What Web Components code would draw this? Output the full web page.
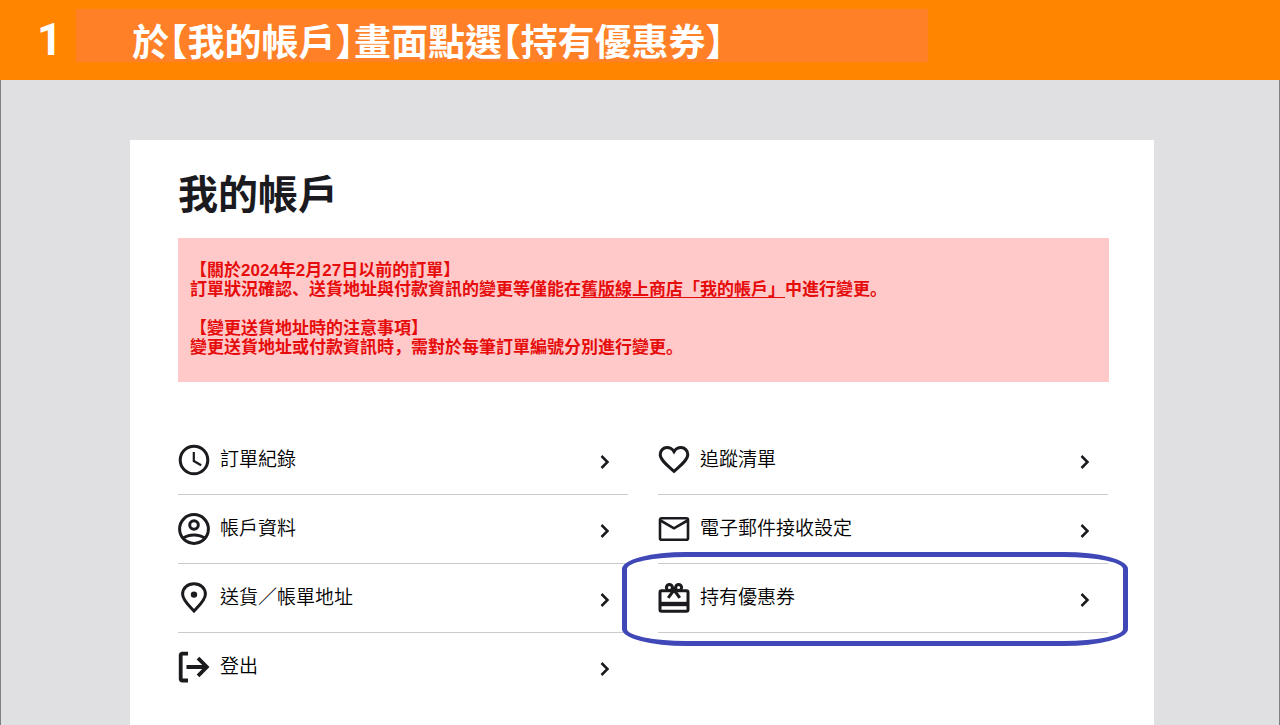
<!DOCTYPE html>
<html lang="zh-Hant">
<head>
<meta charset="utf-8">
<meta name="viewport" content="width=device-width, initial-scale=1">
<title>我的帳戶</title>
<style>
  html, body { margin: 0; min-height: 100%; }
  body {
    min-height: 100vh;
    display: flex;
    flex-direction: column;
    font-family: "Liberation Sans", "Noto Sans CJK JP", sans-serif;
    color: #1b1b1f;
    overflow-x: hidden;
  }
</style>
</head>
<body>
<step-banner step="1">於【我的帳戶】畫面點選【持有優惠券】</step-banner>
<account-page>
  <span slot="title">我的帳戶</span>
  <notice-box slot="notice" lang="zh"></notice-box>
  <menu-item icon="clock">訂單紀錄</menu-item>
  <menu-item icon="heart">追蹤清單</menu-item>
  <menu-item icon="user">帳戶資料</menu-item>
  <menu-item icon="mail">電子郵件接收設定</menu-item>
  <menu-item icon="pin">送貨／帳單地址</menu-item>
  <menu-item icon="gift" highlighted>持有優惠券</menu-item>
  <menu-item icon="logout" last>登出</menu-item>
</account-page>

<template id="step-banner">
  <style>
    :host { display: block; background: #ff8500; color: #fff; }
    header { display: flex; align-items: flex-start; height: 80px; }
    .step {
      flex: 0 0 76px; box-sizing: border-box; padding-left: 37px;
      font: 700 44px/80px Roboto, sans-serif;
    }
    h2 {
      flex: 0 1 852px; box-sizing: border-box; margin: 9px 0 0; padding-left: 56px;
      height: 53px; background: #ff8026; white-space: nowrap;
      font: 700 37px/62px "Noto Sans CJK JP", sans-serif;
      font-feature-settings: "halt";
    }
  </style>
  <header><span class="step"></span><h2><slot></slot></h2></header>
</template>

<template id="account-page">
  <style>
    :host {
      display: flex; flex: 1; box-sizing: border-box;
      padding: 60px 125px 0 129px;
      background: #e0e0e2;
      border: solid #808082; border-width: 0 1px;
    }
    main { flex: 1; min-width: 0; background: #fff; padding: 22px 45px 28px 48px; }
    h1 { margin: 0; font: 700 40px/60px "Noto Sans CJK JP", sans-serif; }
    .notice { margin-top: 16px; }
    nav {
      display: grid; grid-template-columns: 1fr 1fr; column-gap: 30px;
      margin-top: 44px; padding-right: 1px;
    }
  </style>
  <main>
    <h1><slot name="title"></slot></h1>
    <div class="notice"><slot name="notice"></slot></div>
    <nav><slot></slot></nav>
  </main>
</template>

<template id="notice-box">
  <style>
    :host {
      display: block; box-sizing: border-box; padding: 23px 12px 25px;
      background: #ffc9c9; color: #e60c0c;
      font-weight: 700; font-size: 17px; line-height: 19px;
    }
    p { margin: 0; }
    p + p { margin-top: 20px; }
    a { color: inherit; text-underline-offset: 2px; text-decoration-thickness: 1px; }
  </style>
  <p>【關於2024年2月27日以前的訂單】<br>訂單狀況確認、送貨地址與付款資訊的變更等僅能在<a href="#old-store">舊版線上商店「我的帳戶」</a>中進行變更。</p>
  <p>【變更送貨地址時的注意事項】<br>變更送貨地址或付款資訊時，需對於每筆訂單編號分別進行變更。</p>
</template>

<template id="menu-item">
  <style>
    :host { display: block; position: relative; }
    a {
      display: flex; align-items: center; gap: 10px;
      height: 68px; padding-right: 18px;
      border-bottom: 1px solid #cacacd;
      color: #000; text-decoration: none;
      font: 350 19px/28px "Noto Sans CJK JP", sans-serif;
    }
    :host([last]) a { border-bottom-color: transparent; }
    .label { flex: 1; padding-bottom: 4px; }
    .icon { flex: none; color: #1b1b1f; }
    .chevron { flex: none; margin-top: 4px; color: #1b1b1f; }
    svg { display: block; fill: none; stroke: currentColor; stroke-width: 3; }
    .ring { display: none; }
    :host([highlighted]) .ring {
      display: block; position: absolute; inset: -12px -20px -13px -36px;
      border: 5px solid #4048b8; border-radius: 64px / 17px;
      pointer-events: none;
    }
  </style>
  <a href="#">
    <span class="icon"></span>
    <span class="label"><slot></slot></span>
    <svg class="chevron" width="10" height="14" viewBox="0 0 10 14" style="stroke-width:2.5"><path d="M1.5 1l6 6-6 6"/></svg>
  </a>
  <span class="ring"></span>
</template>

<script>
  const ICONS = {
    clock: '<circle cx="16" cy="16" r="13.8"/><path stroke-width="2.2" d="M15.8 8v9l7.4 4.2"/>',
    user: '<circle cx="16" cy="16" r="14.4"/><circle cx="16" cy="12" r="4.3"/><path d="M4.5 25.5C11 20.8 21 20.8 27.5 25.5"/>',
    pin: '<path d="M16 29C11 23.6 4.6 18 4.6 12.2C4.6 6 9.7 1.7 16 1.7S27.4 6 27.4 12.2C27.4 18 21 23.6 16 29Z"/><circle cx="16" cy="12.6" r="3.2" fill="currentColor" stroke="none"/>',
    logout: '<path stroke-width="3.8" d="M10 2.6H4.2a1.5 1.5 0 0 0-1.5 1.5V28a1.5 1.5 0 0 0 1.5 1.500H10M8.500 16H28.500M20 7.200l8.800 8.800-8.800 8.800"/>',
    heart: '<path d="M16 27.3C10 21.8 2.2 16.3 2.2 10.6C2.2 6.6 5.2 3.6 9 3.6C12 3.6 14.5 5.2 16 7.6C17.5 5.2 20 3.6 23 3.6C26.8 3.6 29.8 6.6 29.8 10.6C29.8 16.3 22 21.8 16 27.3Z"/>',
    mail: '<rect x="2" y="5.3" width="28" height="21.5" rx="1.5" stroke-width="2.6"/><path stroke-width="2.6" d="M2.5 7.5L16 15.3L29.5 7.5"/>',
    gift: '<rect x="2" y="8.7" width="28" height="20.5" rx="1.5" stroke-width="3"/><path stroke-width="4.4" d="M2 22H30"/><circle cx="11.4" cy="5.4" r="3" stroke-width="3"/><circle cx="20.6" cy="5.4" r="3" stroke-width="3"/><path stroke-width="3" d="M14.5 5.5L16 8L17.5 5.5M16 8L10.2 15.8M16 8L21.8 15.8"/>'
  };

  class TemplateElement extends HTMLElement {
    constructor() {
      super();
      const template = document.getElementById(this.localName);
      this.attachShadow({ mode: 'open' }).append(template.content.cloneNode(true));
    }
  }

  customElements.define('step-banner', class extends TemplateElement {
    connectedCallback() {
      this.shadowRoot.querySelector('.step').textContent = this.getAttribute('step');
    }
  });
  customElements.define('account-page', class extends TemplateElement {});
  customElements.define('notice-box', class extends TemplateElement {});
  customElements.define('menu-item', class extends TemplateElement {
    connectedCallback() {
      const name = this.getAttribute('icon');
      this.shadowRoot.querySelector('a').href = '#' + name;
      this.shadowRoot.querySelector('.icon').innerHTML =
        `<svg width="32" height="32" viewBox="0 0 32 32" aria-hidden="true">${ICONS[name]}</svg>`;
    }
  });
</script>
</body>
</html>
